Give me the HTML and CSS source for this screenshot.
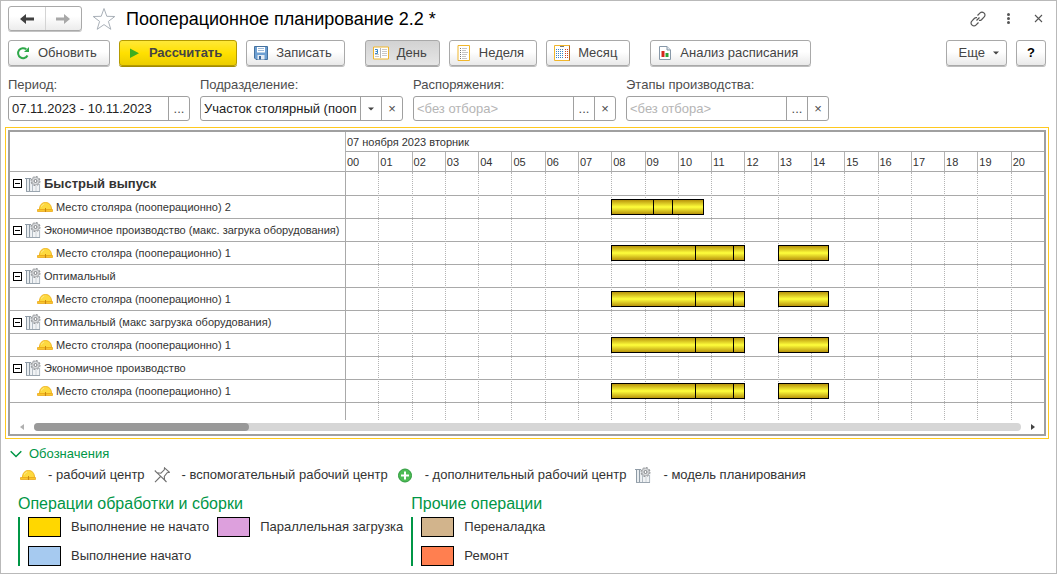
FILE: index.html
```html
<!DOCTYPE html>
<html lang="ru">
<head>
<meta charset="utf-8">
<title>Пооперационное планирование 2.2</title>
<link rel="stylesheet" href="styles.css">
</head>
<body>
<svg class="sprite" aria-hidden="true">
  <symbol id="i-model" viewBox="0 0 16 16">
    <path d="M1 3h5v12.500H1z" fill="#e9edf0"/>
    <path d="M6 6h9.500v9.500H6z" fill="#f1f3f5"/>
    <path d="M0 2.500h6" stroke="#8f9ba6"/>
    <path d="M1.500 3v12.500M4.500 3v12.500" stroke="#8f9ba6"/>
    <path d="M7.500 7v8.500M14.500 8v7.500" stroke="#b4bdc5"/>
    <path d="M11 10v5.500" stroke="#cdd3d8"/>
    <path d="M1 15.500h14" stroke="#9aa5af"/>
    <circle cx="10.500" cy="5" r="4.400" fill="#dcdee0" stroke="#96999c" stroke-width="1.200" stroke-dasharray="1.900 1.550"/>
    <circle cx="10.500" cy="5" r="3.700" fill="#dcdee0" stroke="#a2a5a8" stroke-width=".8"/>
    <circle cx="10.500" cy="5" r="1.500" fill="#fff" stroke="#7d8083"/>
  </symbol>
  <symbol id="i-helmet" viewBox="0 0 16 12">
    <path d="M2.500 8.500C2.500 4 5 1.500 8.500 1.500S14.500 4 14.500 8.500z" fill="#fdd93f" stroke="#f0b41e"/>
    <path d="M.5 8.500h7v1h2v-1h6v2h-15z" fill="#f9c72c" stroke="#eba81a" stroke-width=".8"/>
    <path d="M8.500 7v4" stroke="#c88a10"/>
    <path d="M4.500 5.500C5.200 4 6 3.300 7.200 3" stroke="#ffef9e" fill="none"/>
  </symbol>
</svg>
<div class="window">
  <header class="titlebar">
    <div class="history">
      <button type="button" aria-label="Назад"><svg width="16" height="12" viewBox="0 0 16 12"><path d="M7 1v3.500h8v3H7V11L1 6z" fill="#404040"/></svg></button>
      <button type="button" aria-label="Вперед"><svg width="16" height="12" viewBox="0 0 16 12"><path d="M9 1v3.500H1v3h8V11l6-5z" fill="#a8a8a8"/></svg></button>
    </div>
    <button class="plain star" type="button" aria-label="Избранное"><svg width="24" height="24" viewBox="0 0 24 24"><path d="M12 1.500l2.800 7.800 8 .2-6.400 4.900 2.400 7.900-6.800-4.700-6.800 4.700 2.400-7.900L1.200 9.500l8-.2z" fill="#fff" stroke="#a9b0b8"/></svg></button>
    <h1>Пооперационное планирование 2.2 *</h1>
    <div class="window-tools">
      <button class="plain" type="button" aria-label="Ссылка"><svg width="16" height="16" viewBox="0 0 16 16" fill="none" stroke="#555" stroke-width="1.200"><path d="M7.500 4.500l2.600-2.700a2.600 2.600 0 0 1 3.700 0l.4.400a2.600 2.600 0 0 1 0 3.700L11.500 8.700a2.600 2.600 0 0 1-2.500.6M8.500 11.500l-2.600 2.700a2.600 2.600 0 0 1-3.700 0l-.4-.4a2.600 2.600 0 0 1 0-3.700l2.700-2.800A2.600 2.600 0 0 1 7 6.700M6.500 9.500l3-3"/></svg></button>
      <button class="plain" type="button" aria-label="Меню"><svg width="16" height="16" viewBox="0 0 16 16" fill="#555"><circle cx="8.500" cy="3.500" r="1.500"/><circle cx="8.500" cy="7.500" r="1.500"/><circle cx="8.500" cy="11.500" r="1.500"/></svg></button>
      <button class="plain" type="button" aria-label="Закрыть"><svg width="16" height="16" viewBox="0 0 16 16"><path d="M5 4l7 7M12 4l-7 7" stroke="#555" stroke-width="1.100"/></svg></button>
    </div>
  </header>

  <div class="commands">
    <button class="btn" type="button"><svg width="14" height="14" viewBox="0 0 14 14"><path d="M11.500 9.500A5 5 0 1 1 10.300 3.300" fill="none" stroke="#2fa84a" stroke-width="2"/><path d="M13 1v5H8z" fill="#2fa84a"/></svg>Обновить</button>
    <button class="btn primary" type="button"><svg width="12" height="14" viewBox="0 0 12 14"><path d="M1 2.500v9.500l9-4.800z" fill="#3fae1f"/></svg>Рассчитать</button>
    <button class="btn" type="button"><svg width="14" height="14" viewBox="0 0 14 14"><path d="M.5.5h13v13H2L.5 12z" fill="#6d9fd2" stroke="#44719f"/><path d="M3 1h8v5.500H3z" fill="#fff"/><path d="M4 2.500h6M4 4.500h6" stroke="#9db9d8"/><path d="M3.500 9h7v4.500h-7z" fill="#e4ebf3"/><path d="M5 10h2v3.500H5z" fill="#3d6a9e"/></svg>Записать</button>
    <div class="scale">
      <button class="btn pressed" type="button" aria-pressed="true"><svg width="16" height="14" viewBox="0 0 16 14"><path d="M.5 1h15v12H.5z" fill="#fff" stroke="#f0b62c"/><path d="M7.500 2v10" stroke="#b5b5b5"/><path d="M9 3.500h5M9 5.500h5M9 7.500h5M9 9.500h5M2 8.500h4M2 10.500h4" stroke="#c8c8c8"/><path d="M2 3.500h2.500v4H2M2.500 5.500h2" fill="none" stroke="#3b86c8"/></svg>День</button>
      <button class="btn" type="button"><svg width="14" height="16" viewBox="0 0 14 16"><path d="M1 .5h11.500v15H1z" fill="#fff" stroke="#f0b62c"/><path d="M3 3.500h1M3 5.500h1M3 7.500h1M3 9.500h1M3 11.500h1M3 13.500h1" stroke="#777"/><path d="M5 3.500h5M5 5.500h4M5 7.500h6M5 9.500h5M5 11.500h4M5 13.500h5" stroke="#c4c4c4"/></svg>Неделя</button>
      <button class="btn" type="button"><svg width="16" height="16" viewBox="0 0 16 16"><path d="M.5.5h15v15H.5z" fill="#fff" stroke="#f0b62c"/><path d="M15.500.5v15" stroke="#b5651d"/><path d="M6 1.500h4" stroke="#777"/><path d="M2 4.500h8M2 6.500h8M2 8.500h8M2 10.500h8M2 12.500h8" stroke="#3b86c8" stroke-dasharray="1 1"/><path d="M11 4.500h3M11 6.500h3M11 8.500h3M11 10.500h3M11 12.500h3" stroke="#cf4426" stroke-dasharray="1 1"/></svg>Месяц</button>
    </div>
    <button class="btn" type="button"><svg width="14" height="14" viewBox="0 0 14 14"><path d="M1.500.5h7.500L12.500 4v9.500h-11z" fill="#fff" stroke="#8798a8"/><path d="M9 .5V4h3.500" fill="#dfe6ec" stroke="#8798a8"/><path d="M3.500 5h3v6h-3z" fill="#d6281c"/><path d="M7.500 7h3v4h-3z" fill="#2fa336"/></svg>Анализ расписания</button>
    <div class="commands-end">
      <button class="btn more" type="button">Еще<svg width="6" height="4" viewBox="0 0 6 4"><path d="M0 .5h6L3 3.500z" fill="#444"/></svg></button>
      <button class="btn help" type="button">?</button>
    </div>
  </div>

  <div class="filters">
    <div class="filter">
      <label for="period">Период:</label>
      <div class="box period"><input id="period" type="text" value="07.11.2023 - 10.11.2023"><button type="button" aria-label="Выбрать период">...</button></div>
    </div>
    <div class="filter">
      <label for="dept">Подразделение:</label>
      <div class="box"><input id="dept" type="text" value="Участок столярный (пооперационно)"><button type="button" aria-label="Открыть список"><svg width="6" height="4" viewBox="0 0 6 4"><path d="M0 .5h6L3 3.500z" fill="#444"/></svg></button><button type="button" aria-label="Очистить подразделение">×</button></div>
    </div>
    <div class="filter">
      <label for="orders">Распоряжения:</label>
      <div class="box"><input id="orders" type="text" placeholder="&lt;без отбора&gt;"><button type="button" aria-label="Выбрать распоряжения">...</button><button type="button" aria-label="Очистить распоряжения">×</button></div>
    </div>
    <div class="filter">
      <label for="stages">Этапы производства:</label>
      <div class="box"><input id="stages" type="text" placeholder="&lt;без отбора&gt;"><button type="button" aria-label="Выбрать этапы">...</button><button type="button" aria-label="Очистить этапы">×</button></div>
    </div>
  </div>

  <main class="gantt-focus">
    <div class="gantt">
      <div class="chart">
        <div class="hour-lines" aria-hidden="true"><i></i><i></i><i></i><i></i><i></i><i></i><i></i><i></i><i></i><i></i><i></i><i></i><i></i><i></i><i></i><i></i><i></i><i></i><i></i><i></i><i></i></div>
        <table>
          <colgroup><col class="name-col"><col span="21"></colgroup>
          <thead>
            <tr><td rowspan="2"></td><th class="day" colspan="21">07 ноября 2023 вторник</th></tr>
            <tr class="hours"><th>00</th><th>01</th><th>02</th><th>03</th><th>04</th><th>05</th><th>06</th><th>07</th><th>08</th><th>09</th><th>10</th><th>11</th><th>12</th><th>13</th><th>14</th><th>15</th><th>16</th><th>17</th><th>18</th><th>19</th><th>20</th></tr>
          </thead>
          <tbody>
            <tr class="first"><th scope="row"><div class="model"><button type="button" aria-label="Свернуть"></button><svg><use href="#i-model"/></svg><b>Быстрый выпуск</b></div></th><td colspan="21"></td></tr>
            <tr><th scope="row"><div class="center"><svg><use href="#i-helmet"/></svg>Место столяра (пооперационно) 2</div></th><td colspan="21"><div class="track"><div class="run" style="left:38.1%;width:13.3%"><i style="flex-grow:42"></i><i style="flex-grow:19"></i><i style="flex-grow:31"></i></div></div></td></tr>
            <tr><th scope="row"><div class="model"><button type="button" aria-label="Свернуть"></button><svg><use href="#i-model"/></svg>Экономичное производство (макс. загрука оборудования)</div></th><td colspan="21"></td></tr>
            <tr><th scope="row"><div class="center"><svg><use href="#i-helmet"/></svg>Место столяра (пооперационно) 1</div></th><td colspan="21"><div class="track"><div class="run" style="left:38.1%;width:19.15%"><i style="flex-grow:83"></i><i style="flex-grow:37"></i><i style="flex-grow:10"></i></div><div class="run" style="left:61.9%;width:7.3%"><i style="flex-grow:1"></i></div></div></td></tr>
            <tr><th scope="row"><div class="model"><button type="button" aria-label="Свернуть"></button><svg><use href="#i-model"/></svg>Оптимальный</div></th><td colspan="21"></td></tr>
            <tr><th scope="row"><div class="center"><svg><use href="#i-helmet"/></svg>Место столяра (пооперационно) 1</div></th><td colspan="21"><div class="track"><div class="run" style="left:38.1%;width:19.15%"><i style="flex-grow:83"></i><i style="flex-grow:37"></i><i style="flex-grow:10"></i></div><div class="run" style="left:61.9%;width:7.3%"><i style="flex-grow:1"></i></div></div></td></tr>
            <tr><th scope="row"><div class="model"><button type="button" aria-label="Свернуть"></button><svg><use href="#i-model"/></svg>Оптимальный (макс загрузка оборудования)</div></th><td colspan="21"></td></tr>
            <tr><th scope="row"><div class="center"><svg><use href="#i-helmet"/></svg>Место столяра (пооперационно) 1</div></th><td colspan="21"><div class="track"><div class="run" style="left:38.1%;width:19.15%"><i style="flex-grow:83"></i><i style="flex-grow:37"></i><i style="flex-grow:10"></i></div><div class="run" style="left:61.9%;width:7.3%"><i style="flex-grow:1"></i></div></div></td></tr>
            <tr><th scope="row"><div class="model"><button type="button" aria-label="Свернуть"></button><svg><use href="#i-model"/></svg>Экономичное производство</div></th><td colspan="21"></td></tr>
            <tr><th scope="row"><div class="center"><svg><use href="#i-helmet"/></svg>Место столяра (пооперационно) 1</div></th><td colspan="21"><div class="track"><div class="run" style="left:38.1%;width:19.15%"><i style="flex-grow:83"></i><i style="flex-grow:37"></i><i style="flex-grow:10"></i></div><div class="run" style="left:61.9%;width:7.3%"><i style="flex-grow:1"></i></div></div></td></tr>
            <tr class="rest"><td></td><td colspan="21"></td></tr>
          </tbody>
        </table>
      </div>
      <div class="scroll">
        <svg width="4" height="6" viewBox="0 0 4 6"><path d="M4 0v6L0 3z" fill="#b0b0b0"/></svg>
        <div class="rail"><div class="thumb" style="width:21.8%"></div></div>
        <svg width="4" height="6" viewBox="0 0 4 6"><path d="M0 0v6l4-3z" fill="#444"/></svg>
      </div>
    </div>
  </main>

  <section class="legend">
    <button class="plain toggle" type="button" aria-expanded="true"><svg width="12" height="8" viewBox="0 0 12 8"><path d="M.7 1.200L6 6.500l5.300-5.300" fill="none" stroke="#009646" stroke-width="1.500"/></svg>Обозначения</button>
    <div class="signs">
      <span class="sign"><svg width="16" height="12"><use href="#i-helmet"/></svg>- рабочий центр</span>
      <span class="sign"><svg width="16" height="16" viewBox="0 0 16 16"><path d="M10.500.8l5 4.500-2.300.4-2.900 3.700.3 3.600L3 5.800l3.900.4 3.400-3.400zM6.500 9.500L1 15.200M.8 3.500L3 5.800M10.600 13l1.900 2" fill="none" stroke="#707070" stroke-width="1.100"/></svg>- вспомогательный рабочий центр</span>
      <span class="sign"><svg width="16" height="16" viewBox="0 0 16 16"><circle cx="8" cy="8.500" r="6.500" fill="#4dbb54" stroke="#2c9a3c"/><path d="M8 4.500v8M4 8.500h8" stroke="#fff" stroke-width="2"/></svg>- дополнительный рабочий центр</span>
      <span class="sign"><svg width="16" height="16"><use href="#i-model"/></svg>- модель планирования</span>
    </div>
    <div class="groups">
      <div class="group">
        <h2>Операции обработки и сборки</h2>
        <ul class="two">
          <li><span class="swatch waiting"></span>Выполнение не начато</li>
          <li><span class="swatch parallel"></span>Параллельная загрузка</li>
          <li><span class="swatch started"></span>Выполнение начато</li>
        </ul>
      </div>
      <div class="group">
        <h2>Прочие операции</h2>
        <ul>
          <li><span class="swatch setup"></span>Переналадка</li>
          <li><span class="swatch repair"></span>Ремонт</li>
        </ul>
      </div>
    </div>
  </section>
</div>
</body>
</html>
```
FILE: styles.css
```css
* { box-sizing: border-box; }
body {
  margin: 0;
  background: #fff;
  color: #333;
  font: 13px/16px "Liberation Sans", Arial, sans-serif;
}
button, input { font: inherit; color: inherit; }
button { padding: 0; }
svg { flex: none; display: block; }
.sprite { position: absolute; width: 0; height: 0; }
.window {
  min-height: 100vh;
  border: 1px solid #b9b9b9;
  padding: 5px 10px 7px 7px;
}
.plain { border: 0; background: none; display: flex; align-items: center; }

.titlebar { display: flex; align-items: center; height: 25px; }
.history {
  display: flex;
  width: 74px;
  height: 25px;
  border: 1px solid #a9a9a9;
  border-radius: 3px;
  background: linear-gradient(#fff 40%, #ececec);
  box-shadow: 0 1px 0 #c4c4c4;
}
.history button {
  flex: 1;
  border: 0;
  background: none;
  display: flex;
  align-items: center;
  justify-content: center;
}
.history button + button { border-left: 1px solid #d4d4d4; }
.star { margin-left: 10px; }
h1 { margin: 0 0 0 10px; font-size: 18px; line-height: 24px; font-weight: 400; color: #000; white-space: nowrap; }
.window-tools { display: flex; gap: 14px; margin-left: auto; }

.commands { display: flex; gap: 9px; margin-top: 9px; }
.btn {
  display: flex;
  align-items: center;
  gap: 8px;
  height: 26px;
  padding: 0 12px 0 7px;
  border: 1px solid #a9a9a9;
  border-radius: 3px;
  background: linear-gradient(#fff 45%, #e9e9e9);
  box-shadow: 0 1px 0 #bdbdbd;
  color: #444;
  white-space: nowrap;
}
.primary {
  padding: 0 14px 0 9px;
  border-color: #b59b00;
  background: linear-gradient(#ffe838, #ffe000 50%, #ebcd00);
  box-shadow: 0 1px 0 #a38c00;
  font-weight: 700;
}
.pressed { background: linear-gradient(#d2d2d2, #e6e6e6); box-shadow: 0 1px 0 #a9a9a9; }
.scale { display: flex; gap: 9px; margin: 0 11px; }
.commands-end { display: flex; gap: 9px; margin-left: auto; }
.more { padding: 0 7px 0 12px; }
.help { width: 30px; padding: 0; justify-content: center; font-weight: 700; color: #000; }

.filters { display: flex; gap: 10px; margin-top: 11px; }
.filter { display: flex; flex-direction: column; gap: 3px; color: #4d4d4d; }
.box {
  display: flex;
  width: 203px;
  height: 25px;
  border: 1px solid #a0a0a0;
  border-radius: 3px;
  background: #fff;
  overflow: hidden;
}
.period { width: 182px; }
.box input { flex: 1; min-width: 0; margin: 0 3px; padding: 0; border: 0; outline: 0; background: none; color: #222; }
.box input::placeholder { color: #b5b5b5; opacity: 1; }
.box button {
  width: 21px;
  border: 0;
  border-left: 1px solid #a0a0a0;
  background: none;
  display: flex;
  align-items: center;
  justify-content: center;
}

.gantt-focus { margin: 6px -3px 0; border: 1px solid #ffc91f; padding: 2px; }
.gantt { border: 2px solid #a0a0a0; }
.chart { position: relative; }
table { width: 100%; table-layout: fixed; border-collapse: separate; border-spacing: 0; font-size: 11px; line-height: 14px; }
.name-col { width: 335px; }
th, td { padding: 0; font-weight: 400; text-align: left; height: 23px; border-bottom: 1px solid #a9a9a9; white-space: nowrap; }
thead th { height: 20px; padding-left: 1px; border-left: 1px solid #b4b4b4; }
tr.first th, tr.first td { height: 24px; }
.rest td { height: 17px; border-bottom: 0; }
.hour-lines {
  position: absolute;
  top: 40px;
  bottom: 0;
  left: 335px;
  right: 0;
  display: grid;
  grid-template-columns: repeat(21, 1fr);
}
.hour-lines i { border-left: 1px dotted #b4b4b4; }
.hour-lines i:first-child { border-left: 1px solid #a9a9a9; }
.model, .center { display: flex; align-items: center; }
.model { padding-left: 3px; }
.model b { font-size: 13px; }
.model svg { width: 16px; height: 16px; margin: 0 3px 0 3px; }
.model button {
  width: 9px;
  height: 9px;
  border: 1px solid #000;
  background: linear-gradient(#000, #000) center / 5px 1px no-repeat #fff;
}
.center { padding-left: 27px; gap: 3px; }
.center svg { width: 16px; height: 12px; }
.track { position: relative; height: 16px; }
.run { position: absolute; top: 0; height: 16px; display: flex; border: 1px solid #000; }
.run i { flex-basis: 0; background: linear-gradient(#b8940c, #ffff3c 50%, #b8940c); }
.run i + i { border-left: 1px solid #000; }

.scroll { display: flex; align-items: center; height: 14px; padding: 0 9px 0 10px; gap: 10px; }
.rail { flex: 1; height: 8px; border-radius: 4px; background: #d6d6d6; }
.thumb { height: 8px; border-radius: 4px; background: #999; }

.legend { margin-top: 7px; padding-left: 2px; }
.toggle { gap: 7px; color: #009646; }
.signs { display: flex; gap: 9px; margin-top: 5px; padding-left: 10px; }
.sign { display: flex; align-items: center; gap: 12px; white-space: nowrap; }
.groups { display: flex; gap: 8px; margin-top: 11px; padding-left: 8px; }
h2 { margin: 0 0 3px; font-size: 16px; line-height: 20px; font-weight: 400; color: #009646; white-space: nowrap; }
ul { display: grid; gap: 9px 8px; margin: 0; padding: 0 0 0 8px; border-left: 2px solid #009646; list-style: none; }
.two { grid-template-columns: auto auto; }
li { display: flex; align-items: center; gap: 10px; height: 20px; white-space: nowrap; }
.swatch { width: 33px; height: 20px; border: 1px solid #000; }
.waiting { background: #ffd700; }
.parallel { background: #dda0dd; }
.started { background: #a6caf0; }
.setup { background: #d2b48c; }
.repair { background: #ff7f50; }
```
